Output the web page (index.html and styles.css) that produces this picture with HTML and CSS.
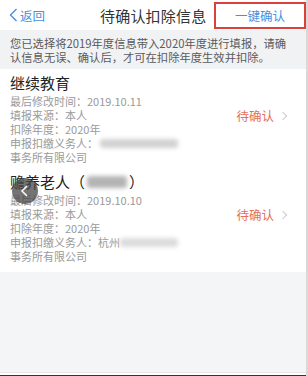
FILE: index.html
```html
<!DOCTYPE html>
<html lang="zh-CN">
<head>
    <meta charset="UTF-8">
    <title>待确认扣除信息</title>
    <link rel="stylesheet" href="styles.css">
</head>
<body>
<div class="page">
    <header class="nav">
        <a class="nav-back" href="#">
            <svg width="9" height="14" viewBox="0 0 9 14"><path d="M7.5 1L1.5 7l6 6" fill="none" stroke="#4a8fe0" stroke-width="1.4"/></svg>
            <span>返回</span>
        </a>
        <h1 class="nav-title">待确认扣除信息</h1>
        <a class="nav-action" href="#">一键确认</a>
    </header>

    <p class="notice">您已选择将2019年度信息带入2020年度进行填报，请确认信息无误、确认后，才可在扣除年度生效并扣除。</p>

    <section class="list">
        <div class="item">
            <div class="item-info">
                <h2 class="item-title">继续教育</h2>
                <p>最后修改时间：2019.10.11</p>
                <p>填报来源：本人</p>
                <p>扣除年度：2020年</p>
                <p>申报扣缴义务人：<span class="mask mask-a"></span></p>
                <p>事务所有限公司</p>
            </div>
            <div class="item-status">待确认<span class="arrow"></span></div>
        </div>
        <div class="item item-second">
            <div class="item-info">
                <h2 class="item-title">赡养老人（<span class="mask mask-b"></span>）
                    <span class="float-back">
                        <svg width="10" height="12" viewBox="0 0 10 12"><path d="M7 1L2 6l5 5" fill="none" stroke="#fff" stroke-width="1.5"/></svg>
                    </span>
                </h2>
                <p>最后修改时间：2019.10.10</p>
                <p>填报来源：本人</p>
                <p>扣除年度：2020年</p>
                <p>申报扣缴义务人：杭州<span class="mask mask-c"></span></p>
                <p>事务所有限公司</p>
            </div>
            <div class="item-status">待确认<span class="arrow"></span></div>
        </div>
    </section>

    <div class="rest"></div>
    <div class="bottom-line"></div>
</div>
</body>
</html>
```

FILE: styles.css
```css
*{box-sizing: border-box}
body{
    margin: 0;
    font-family: "Noto Sans CJK SC", "Liberation Sans", sans-serif;
    background: #f4f5f7;
}
.page{
    width: 308px;
    height: 376px;
    display: flex;
    flex-direction: column;
    border-right: 2px solid #d9d9d9;
    overflow: hidden;
}
.nav{
    height: 30px;
    background: #fff;
    display: flex;
    align-items: center;
}
.nav-back{
    display: flex;
    align-items: center;
    gap: 2px;
    padding-left: 9px;
    width: 100px;
    color: #4a8fe0;
    font-size: 12.5px;
    text-decoration: none;
}
.nav-title{
    margin: 0;
    font-size: 15px;
    font-weight: normal;
    color: #333;
    letter-spacing: 0.2px;
}
.nav-action{
    margin-left: auto;
    height: 27px;
    width: 92px;
    margin-top: 1px;
    border: 2px solid #d9413c;
    color: #4a8fe0;
    font-size: 12.5px;
    text-decoration: none;
    display: flex;
    align-items: center;
    justify-content: center;
}
.notice{
    margin: 0;
    padding: 7px 10px 4px;
    height: 39px;
    font-size: 11.3px;
    line-height: 13.5px;
    color: #5a5a5a;
    background: #f1f2f4;
}
.list{
    background: #fff;
    padding: 4px 0 9px;
}
.item{
    display: flex;
    align-items: center;
    padding: 0 10px;
}
.item-second{
    margin-top: 8px;
}
.item-info{
    flex: 1;
}
.item-title{
    margin: 0 0 1px;
    font-size: 15px;
    font-weight: normal;
    color: #222;
    line-height: 20px;
    display: flex;
    align-items: center;
    position: relative;
}
.item-info p{
    margin: 0;
    font-size: 11px;
    line-height: 14px;
    color: #9a9a9a;
    display: flex;
    align-items: center;
}
.item-status{
    color: #e2705d;
    font-size: 12.5px;
    display: flex;
    align-items: center;
    gap: 6px;
    padding-right: 10px;
    margin-top: -6px;
}
.arrow{
    width: 6px;
    height: 6px;
    border-top: 1px solid #ccc;
    border-right: 1px solid #ccc;
    transform: rotate(45deg);
}
.mask{
    display: inline-block;
    height: 9px;
    background: #d2d2d2;
    filter: blur(2px);
    border-radius: 3px;
}
.mask-a{
    width: 78px;
    margin-left: 2px;
}
.mask-b{
    width: 40px;
    height: 12px;
    margin: 0 2px;
    background: #b4b4b4;
}
.mask-c{
    width: 58px;
    background: #dcdcdc;
}
.float-back{
    position: absolute;
    left: 2px;
    top: 6px;
    width: 26px;
    height: 26px;
    border-radius: 50%;
    background: rgba(70, 70, 70, 0.75);
    display: flex;
    align-items: center;
    justify-content: center;
}
.rest{
    flex: 1;
    background: #f4f5f7;
    border-bottom: 1px solid #e6e7ea;
}
.bottom-line{
    height: 3px;
    background: #fff;
    border-bottom: 1px solid #333;
}
```
